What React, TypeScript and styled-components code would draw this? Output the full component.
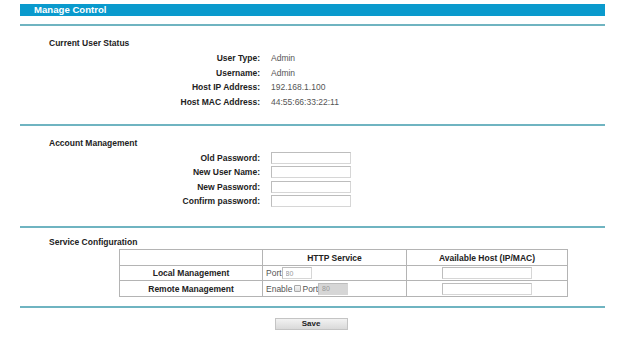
import React from "react";
import styled, { createGlobalStyle } from "styled-components";

const GlobalStyle = createGlobalStyle`
  body {
    margin: 0;
    background: #ffffff;
    font-family: "Liberation Sans", Arial, sans-serif;
  }
`;

const userStatus = [
  { label: "User Type:", value: "Admin" },
  { label: "Username:", value: "Admin" },
  { label: "Host IP Address:", value: "192.168.1.100" },
  { label: "Host MAC Address:", value: "44:55:66:33:22:11" },
];

const accountFields = [
  "Old Password:",
  "New User Name:",
  "New Password:",
  "Confirm password:",
];

function App() {
  return (
    <>
      <GlobalStyle />
      <Page>
        <HeaderBar>Manage Control</HeaderBar>
        <Divider $top={8} />

        <Section $pad={11} $bottom={15}>
          <SectionTitle>Current User Status</SectionTitle>
          <FormGrid $row={14.5}>
            {userStatus.map((r) => (
              <React.Fragment key={r.label}>
                <Label>{r.label}</Label>
                <Value>{r.value}</Value>
              </React.Fragment>
            ))}
          </FormGrid>
        </Section>
        <Divider />

        <Section $pad={11} $bottom={18}>
          <SectionTitle>Account Management</SectionTitle>
          <FormGrid $row={14.33}>
            {accountFields.map((f) => (
              <React.Fragment key={f}>
                <Label>{f}</Label>
                <Value>
                  <TextInput $width={80} />
                </Value>
              </React.Fragment>
            ))}
          </FormGrid>
        </Section>
        <Divider />

        <Section $pad={8} $bottom={9}>
          <SectionTitle $gap={1}>Service Configuration</SectionTitle>
          <ServiceTable>
            <colgroup>
              <col style={{ width: 143 }} />
              <col style={{ width: 144 }} />
              <col style={{ width: 161 }} />
            </colgroup>
            <thead>
              <tr>
                <HeadCell />
                <HeadCell>HTTP Service</HeadCell>
                <HeadCell>Available Host (IP/MAC)</HeadCell>
              </tr>
            </thead>
            <tbody>
              <tr>
                <HeadCell>Local Management</HeadCell>
                <PlainCell>
                  <InlineText>Port</InlineText>
                  <TextInput $width={30} defaultValue="80" />
                </PlainCell>
                <CenterCell>
                  <TextInput $width={90} />
                </CenterCell>
              </tr>
              <tr>
                <HeadCell>Remote Management</HeadCell>
                <PlainCell>
                  <InlineText>Enable</InlineText>
                  <Check type="checkbox" />
                  <InlineText>Port</InlineText>
                  <TextInput $width={30} $disabled defaultValue="80" disabled />
                </PlainCell>
                <CenterCell>
                  <TextInput $width={90} />
                </CenterCell>
              </tr>
            </tbody>
          </ServiceTable>
        </Section>
        <Divider />

        <ButtonRow>
          <SaveButton>Save</SaveButton>
        </ButtonRow>
      </Page>
    </>
  );
}

const Page = styled.div`
  width: 585px;
  margin: 4px 0 0 20px;
`;

const HeaderBar = styled.div`
  height: 12px;
  line-height: 12px;
  background: #0a9acd;
  color: #ffffff;
  font-size: 9.6px;
  font-weight: bold;
  padding-left: 14px;
  overflow: hidden;
`;

const Divider = styled.div<{ $top?: number }>`
  height: 2px;
  margin-top: ${(p) => p.$top ?? 0}px;
  background: #6fb4c1;
`;

const Section = styled.div<{ $pad: number; $bottom: number }>`
  padding: ${(p) => p.$pad}px 0 ${(p) => p.$bottom}px 29px;
`;

const SectionTitle = styled.div<{ $gap?: number }>`
  font-size: 8.5px;
  font-weight: bold;
  color: #222;
  height: 12px;
  line-height: 12px;
  margin-bottom: ${(p) => p.$gap ?? 2}px;
`;

const FormGrid = styled.div<{ $row: number }>`
  display: grid;
  grid-template-columns: 211px 1fr;
  grid-auto-rows: ${(p) => p.$row}px;
  column-gap: 11px;
  align-items: center;
`;

const Label = styled.div`
  text-align: right;
  font-size: 8.5px;
  font-weight: bold;
  color: #222;
`;

const Value = styled.div`
  font-size: 8.5px;
  color: #555;
  display: flex;
  align-items: center;
`;

const TextInput = styled.input<{ $width: number; $disabled?: boolean }>`
  box-sizing: border-box;
  width: ${(p) => p.$width}px;
  height: 12px;
  padding: 0 0 0 3px;
  margin: 0;
  border: 1px solid #d6d6d6;
  border-top-color: #bdbdbd;
  border-left-color: #bdbdbd;
  background: ${(p) => (p.$disabled ? "#d6d6d6" : "#ffffff")};
  font-family: "Liberation Sans", Arial, sans-serif;
  font-size: 7px;
  color: #999;
  vertical-align: middle;
`;

const ServiceTable = styled.table`
  border-collapse: collapse;
  margin: 0 0 0 70px;
  width: 448px;
  table-layout: fixed;
  font-size: 8.5px;
`;

const HeadCell = styled.td`
  border: 1px solid #b4b4b4;
  height: 14.5px;
  padding: 0;
  text-align: center;
  font-weight: bold;
  color: #222;
`;

const PlainCell = styled.td`
  border: 1px solid #b4b4b4;
  height: 14.5px;
  padding: 0 0 0 3px;
  color: #555;
  white-space: nowrap;
`;

const CenterCell = styled.td`
  border: 1px solid #b4b4b4;
  height: 14.5px;
  padding: 0;
  text-align: center;
`;

const InlineText = styled.span`
  vertical-align: middle;
`;

const Check = styled.input`
  appearance: none;
  box-sizing: border-box;
  width: 7px;
  height: 7px;
  margin: 0 1px 0 2px;
  border: 1px solid #a8a8a8;
  border-radius: 1px;
  background: linear-gradient(#f4f4f4, #dedede);
  vertical-align: middle;
`;

const ButtonRow = styled.div`
  display: flex;
  justify-content: center;
  padding-top: 10px;
  margin-left: -3px;
`;

const SaveButton = styled.button`
  width: 73px;
  height: 12px;
  padding: 0;
  border: 1px solid #c4c4c4;
  background: linear-gradient(#f2f2f2, #d9d9d9);
  font-family: "Liberation Sans", Arial, sans-serif;
  font-size: 8px;
  font-weight: bold;
  color: #222;
  line-height: 10px;
`;

export default App;
